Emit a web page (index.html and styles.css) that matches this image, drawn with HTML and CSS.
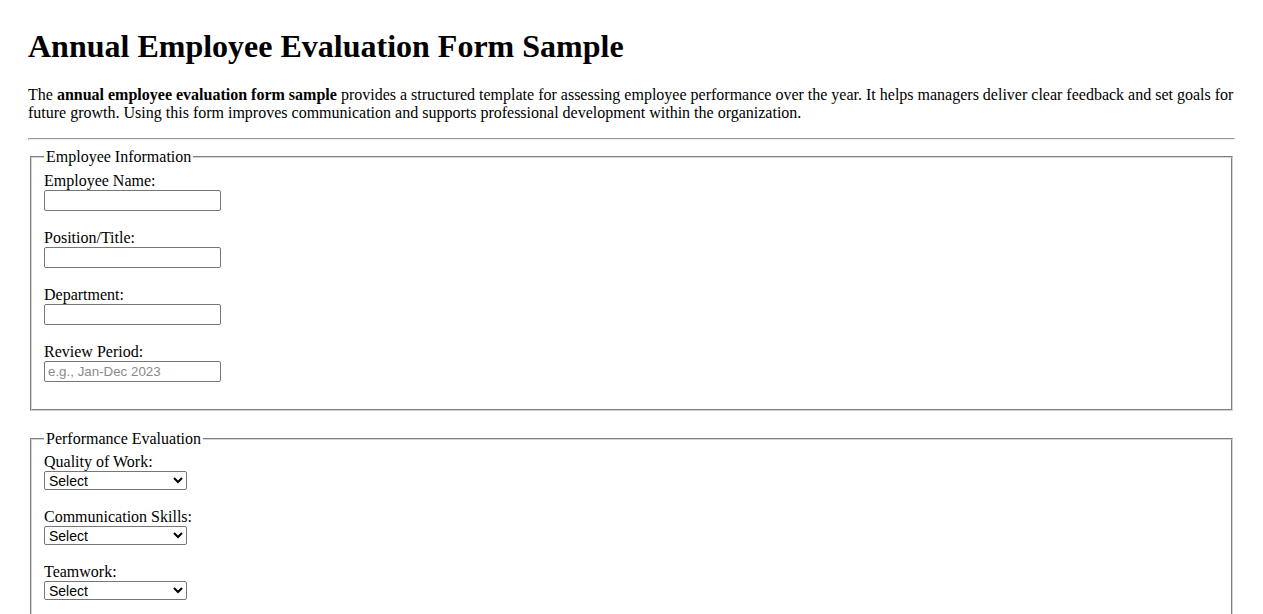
FILE: index.html
```html
<!DOCTYPE html>
<html lang="en">
<head>
    <meta charset="UTF-8">
    <meta name="viewport" content="width=device-width, initial-scale=1.0">
    <title>Annual Employee Evaluation Form Sample</title>
    <link rel="stylesheet" href="styles.css">
</head>
<body>
    <h1>Annual Employee Evaluation Form Sample</h1>
    <p>The <strong>annual employee evaluation form sample</strong> provides a structured template for assessing employee performance over the year. It helps managers deliver clear feedback and set goals for future growth. Using this form improves communication and supports professional development within the organization.</p>
    <hr>
    <form class="eval-form">
        <fieldset>
            <legend>Employee Information</legend>
            <div class="field">
                <label for="empName">Employee Name:</label>
                <input type="text" id="empName" class="text-input">
            </div>
            <div class="field">
                <label for="position">Position/Title:</label>
                <input type="text" id="position" class="text-input">
            </div>
            <div class="field">
                <label for="department">Department:</label>
                <input type="text" id="department" class="text-input">
            </div>
            <div class="field">
                <label for="period">Review Period:</label>
                <input type="text" id="period" class="text-input" placeholder="e.g., Jan-Dec 2023">
            </div>
        </fieldset>

        <fieldset>
            <legend>Performance Evaluation</legend>
            <div class="field">
                <label for="quality">Quality of Work:</label>
                <select id="quality" class="rating">
                    <option>Select</option>
                    <option>Excellent</option>
                    <option>Good</option>
                    <option>Satisfactory</option>
                    <option>Needs Improvement</option>
                </select>
            </div>
            <div class="field">
                <label for="communication">Communication Skills:</label>
                <select id="communication" class="rating">
                    <option>Select</option>
                    <option>Excellent</option>
                    <option>Good</option>
                    <option>Satisfactory</option>
                    <option>Needs Improvement</option>
                </select>
            </div>
            <div class="field">
                <label for="teamwork">Teamwork:</label>
                <select id="teamwork" class="rating">
                    <option>Select</option>
                    <option>Excellent</option>
                    <option>Good</option>
                    <option>Satisfactory</option>
                    <option>Needs Improvement</option>
                </select>
            </div>
            <div class="field">
                <label for="initiative">Initiative:</label>
                <select id="initiative" class="rating">
                    <option>Select</option>
                    <option>Excellent</option>
                    <option>Good</option>
                    <option>Satisfactory</option>
                    <option>Needs Improvement</option>
                </select>
            </div>
        </fieldset>

        <fieldset>
            <legend>Comments and Goals</legend>
            <div class="field">
                <label for="comments">Manager Comments:</label>
                <textarea id="comments" rows="4" cols="50"></textarea>
            </div>
            <div class="field">
                <label for="goals">Goals for Next Year:</label>
                <textarea id="goals" rows="4" cols="50"></textarea>
            </div>
        </fieldset>

        <button type="submit">Submit Evaluation</button>
    </form>
</body>
</html>
```

FILE: styles.css
```css
body {
    font-family: "Liberation Serif", "Times New Roman", serif;
    font-size: 16px;
    color: #000;
    background-color: #fff;
    margin: 8px;
    padding: 20px;
}
h1 {
    font-size: 32px;
    margin-top: 0;
    margin-bottom: 21px;
}
p {
    margin: 16px 0;
}
hr {
    margin: 8px 0;
}
fieldset {
    margin: 0 2px 19px;
    padding: 5.6px 12px 9px;
    border: 2px groove #d4d4d4;
}
legend {
    padding: 0 2px;
}
.field {
    margin-bottom: 18px;
}
.field label {
    display: block;
}
.text-input {
    display: block;
    box-sizing: border-box;
    width: 177px;
    height: 21px;
    font-family: "Liberation Sans", Arial, sans-serif;
    font-size: 13.33px;
    border: 1px solid #767676;
    border-radius: 2px;
    padding: 1px 3px;
}
.text-input::placeholder {
    color: #8a8a8a;
}
.rating {
    display: block;
    box-sizing: border-box;
    width: 143px;
    height: 19px;
    font-family: "Liberation Sans", Arial, sans-serif;
    font-size: 14px;
    background-color: #fff;
    border: 1px solid #767676;
    border-radius: 2px;
}
textarea {
    display: block;
    font-family: "Liberation Mono", monospace;
}
```
